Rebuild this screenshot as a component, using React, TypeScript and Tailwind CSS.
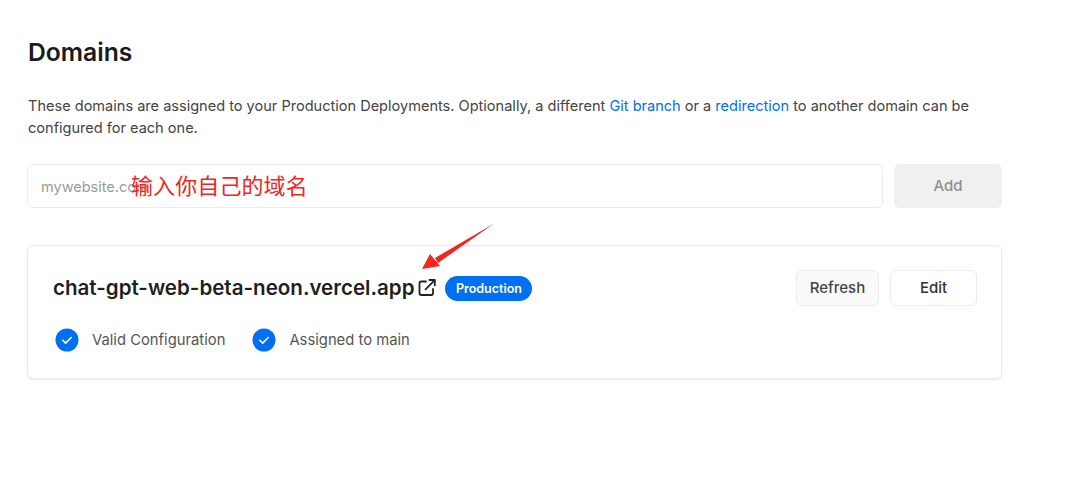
import React from 'react';

const font = "font-['Inter','Noto_Sans_CJK_SC',sans-serif]";

const CheckBadge: React.FC = () => (
  <svg width="24" height="24" viewBox="0 0 24 24" className="shrink-0">
    <circle cx="12" cy="12" r="11.5" fill="#0070f3" />
    <path d="M7.8 12.2l2.9 2.9 5.5-5.6" fill="none" stroke="#fff" strokeWidth="1.6" strokeLinecap="round" strokeLinejoin="round" />
  </svg>
);

const App: React.FC = () => {
  return (
    <div className={`${font} relative h-[482px] w-[1080px] overflow-hidden bg-white text-[#1f1f1f]`}>
      <div className="w-[975px] ml-[27px] pt-[36px]">
        <h1 className="pl-[1px] text-[24.7px] leading-8 font-semibold text-[#1a1a1a]">Domains</h1>

        <p className="mt-[27px] pl-[1px] text-[14.56px] leading-[22px] text-[#444]">
          These domains are assigned to your Production Deployments. Optionally, a different{' '}
          <span className="text-[#0070f3]">Git branch</span> or a <span className="text-[#0070f3]">redirection</span> to another domain can be
          configured for each one.
        </p>

        {/* Add domain */}
        <div className="mt-[25px] flex gap-[11px]">
          <div className="relative flex-1">
            <input
              readOnly
              placeholder="mywebsite.com"
              className="h-[44px] w-full rounded-md border border-[#ececec] bg-white px-[13px] text-[14.5px] outline-none placeholder:text-[#9b9b9b]"
            />
            <span className="absolute left-[104px] top-[7px] text-[22px] leading-[30px] tracking-[0.1px] text-[#f5241c]">输入你自己的域名</span>
          </div>
          <button className="h-[44px] w-[108px] rounded-md border border-[#ececec] bg-[#f0f0f0] text-[15px] font-medium text-[#8f8f8f]">
            Add
          </button>
        </div>

        {/* Domain card */}
        <div className="mt-[37px] h-[134px] rounded-md border border-[#eaeaea] bg-white pl-[25px] pr-[24px] pt-[24px] shadow-[0_1px_2px_rgba(0,0,0,0.08)]">
          <div className="flex items-center justify-between">
            <div className="flex items-center">
              <span className="text-[20.55px] leading-[36px] font-semibold text-[#1f1f1f]">chat-gpt-web-beta-neon.vercel.app</span>
              <svg width="20" height="20" viewBox="0 0 20 20" fill="none" stroke="#222" strokeWidth="1.8" strokeLinecap="round" strokeLinejoin="round" className="ml-[3px]">
                <path d="M9 3.5H4.2A1.7 1.7 0 0 0 2.5 5.2v10.1A1.7 1.7 0 0 0 4.2 17h10.1a1.7 1.7 0 0 0 1.7-1.7V11" />
                <path d="M12.5 2h5.3v5.3" />
                <path d="M17.5 2.3 8.5 11.4" />
              </svg>
              <span className="ml-[8px] flex h-[25px] w-[87px] items-center justify-center rounded-full bg-[#0070f3] pt-[2px] text-[12.5px] font-semibold text-white">
                Production
              </span>
            </div>
            <div className="flex items-center gap-[11px]">
              <button className="h-[36px] w-[83px] rounded-md border border-[#ececec] bg-[#fafafa] pt-[1px] text-[15px] font-medium text-[#444]">
                Refresh
              </button>
              <button className="h-[36px] w-[87px] rounded-md border border-[#ececec] bg-white pt-[1px] text-[15px] font-medium text-[#333]">
                Edit
              </button>
            </div>
          </div>
          <div className="mt-[22px] flex items-center text-[14.8px] leading-[24px] text-[#555]">
            <span className="ml-[2px]"><CheckBadge /></span>
            <span className="ml-[13px]">Valid Configuration</span>
            <span className="ml-[27px]"><CheckBadge /></span>
            <span className="ml-[13px]">Assigned to main</span>
          </div>
        </div>
      </div>

      {/* Annotation arrow */}
      <svg width="90" height="60" viewBox="0 0 90 60" className="absolute left-[415px] top-[218px]">
        <path d="M79 5.5 L20 40 L23 45 Z" fill="#f5241c" />
        <path d="M7 51 L25 48 L15 36 Z" fill="#f5241c" />
      </svg>
    </div>
  );
};

export default App;
